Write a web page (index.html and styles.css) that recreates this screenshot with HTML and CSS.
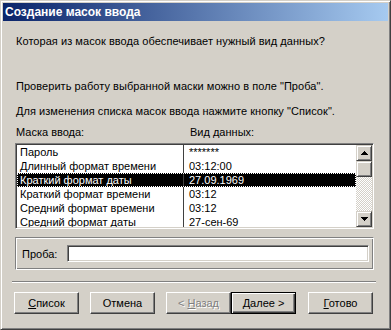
FILE: index.html
```html
<!DOCTYPE html>
<html lang="ru">
<head>
<meta charset="utf-8">
<title>Создание масок ввода</title>
<link rel="stylesheet" href="styles.css">
</head>
<body>
<div class="window">
  <div class="titlebar">Создание масок ввода</div>
  <div class="content">
    <p class="text q">Которая из масок ввода обеспечивает нужный вид данных?</p>
    <p class="text hint1">Проверить работу выбранной маски можно в поле "Проба".</p>
    <p class="text hint2">Для изменения списка масок ввода нажмите кнопку "Список".</p>
    <div class="heads"><span class="h1">Маска ввода:</span><span class="h2">Вид данных:</span></div>
    <div class="listbox">
      <div class="rows">
        <div class="row"><span class="c1">Пароль</span><span class="c2">*******</span></div>
        <div class="row"><span class="c1">Длинный формат времени</span><span class="c2">03:12:00</span></div>
        <div class="row sel"><span class="c1">Краткий формат даты</span><span class="c2">27.09.1969</span></div>
        <div class="row"><span class="c1">Краткий формат времени</span><span class="c2">03:12</span></div>
        <div class="row"><span class="c1">Средний формат времени</span><span class="c2">03:12</span></div>
        <div class="row"><span class="c1">Средний формат даты</span><span class="c2">27-сен-69</span></div>
      </div>
      <div class="scrollbar">
        <div class="sb-btn"><svg width="7" height="4" viewBox="0 0 7 4"><path d="M3 0h1v1h1v1h1v1h1v1H0V3h1V2h1V1h1z" fill="#000"/></svg></div>
        <div class="sb-btn thumb"></div>
        <div class="sb-track"></div>
        <div class="sb-btn"><svg width="7" height="4" viewBox="0 0 7 4"><path d="M0 0h7v1H6v1H5v1H4v1H3V3H2V2H1V1H0z" fill="#000"/></svg></div>
      </div>
    </div>
    <div class="group">
      <span class="glabel">Проба:</span>
      <div class="input"></div>
    </div>
    <div class="sep"></div>
    <div class="buttons">
      <button class="btn"><u>С</u>писок</button>
      <button class="btn">Отмена</button>
      <button class="btn disabled">&lt; <u>Н</u>азад</button>
      <button class="btn default"><u>Д</u>алее &gt;</button>
      <button class="btn last"><u>Г</u>отово</button>
    </div>
  </div>
</div>
</body>
</html>
```

FILE: styles.css
```css
* { box-sizing: border-box; }
html, body { margin: 0; padding: 0; }
body {
  width: 391px;
  height: 330px;
  background: #d4d0c8;
  font-family: "Liberation Sans", Arial, sans-serif;
  font-size: 11px;
  color: #000;
}
.window {
  width: 391px;
  height: 330px;
  background: #d4d0c8;
  border: 1px solid;
  border-color: #d4d0c8 #404040 #404040 #d4d0c8;
  box-shadow: inset 1px 1px #fff, inset -1px -1px #808080;
  padding: 2px;
  display: flex;
  flex-direction: column;
}
.titlebar {
  height: 18px;
  flex: none;
  background: linear-gradient(to right, #0a246a, #a6caf0);
  color: #fff;
  font-weight: bold;
  font-size: 12px;
  line-height: 18px;
  padding-left: 2px;
  white-space: nowrap;
}
.content {
  display: flex;
  flex-direction: column;
  padding-top: 14px;
}
.text {
  margin: 0 0 0 13px;
  line-height: 13px;
  height: 13px;
  white-space: nowrap;
  letter-spacing: 0.05px;
}
.hint1 { margin-top: 32px; }
.hint2 { margin-top: 12px; }
.heads {
  margin: 8px 0 0 13px;
  height: 13px;
  line-height: 13px;
  display: flex;
}
.h1 { width: 174px; }
.listbox {
  margin: 4px 0 0 12px;
  width: 359px;
  height: 86px;
  border: 1px solid;
  border-color: #808080 #fff #fff #808080;
  box-shadow: inset 1px 1px #404040, inset -1px -1px #d4d0c8;
  padding: 1px;
  display: flex;
  background: #fff;
  overflow: hidden;
}
.rows {
  flex: 1;
  display: flex;
  flex-direction: column;
  overflow: hidden;
}
.row {
  height: 14px;
  flex: none;
  line-height: 14px;
  display: flex;
  white-space: nowrap;
}
.c1 {
  width: 167px;
  padding-left: 3px;
  border-right: 1px solid #404040;
  flex: none;
}
.c2 { padding-left: 5px; flex: 1; }
.row.sel {
  background: #000;
  color: #fff;
  outline: 1px dotted #fff;
  outline-offset: -1px;
}
.scrollbar {
  width: 16px;
  flex: none;
  display: flex;
  flex-direction: column;
}
.sb-btn {
  width: 16px;
  height: 16px;
  flex: none;
  background: #d4d0c8;
  border: 1px solid;
  border-color: #d4d0c8 #404040 #404040 #d4d0c8;
  box-shadow: inset 1px 1px #fff, inset -1px -1px #808080;
  display: flex;
  align-items: center;
  justify-content: center;
}
.sb-btn svg { display: block; }
.sb-track {
  flex: 1;
  background: repeating-conic-gradient(#fff 0 25%, #d4d0c8 0 50%) 0 0 / 2px 2px;
}
.group {
  margin: 8px 0 0 12px;
  width: 359px;
  height: 33px;
  border: 1px solid;
  border-color: #808080 #fff #fff #808080;
  box-shadow: inset 1px 1px #fff, inset -1px -1px #808080;
  display: flex;
  align-items: center;
  padding: 0 3px 0 6px;
}
.glabel { width: 45px; flex: none; }
.input {
  width: 302px;
  height: 17px;
  background: #fff;
  border: 1px solid;
  border-color: #808080 #fff #fff #808080;
  box-shadow: inset 1px 1px #404040, inset -1px -1px #d4d0c8;
}
.sep {
  margin: 11px 0 0 9px;
  width: 364px;
  height: 2px;
  border-top: 1px solid #808080;
  border-bottom: 1px solid #fff;
}
.buttons {
  margin: 9px 0 0 11px;
  display: flex;
}
.btn {
  width: 65px;
  height: 22px;
  margin: 0 11px 0 0;
  padding: 0;
  font: inherit;
  color: #000;
  background: #d4d0c8;
  border: 1px solid;
  border-color: #fff #404040 #404040 #fff;
  box-shadow: inset -1px -1px #808080, inset 1px 1px #d4d0c8;
}
.btn.disabled {
  color: #808080;
  text-shadow: 1px 1px #fff;
  margin-right: 0;
}
.btn.default {
  border: 1px solid #000;
  box-shadow: inset 1px 1px #fff, inset -1px -1px #404040, inset -2px -2px #808080;
  margin-right: 12px;
}
```
